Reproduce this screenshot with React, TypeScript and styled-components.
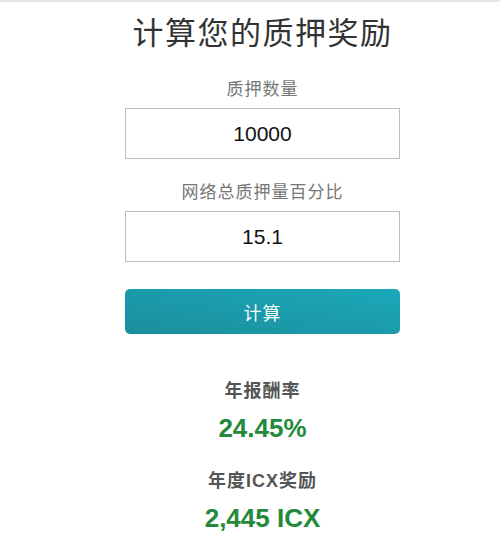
import styled, {createGlobalStyle} from 'styled-components';

const GlobalStyle = createGlobalStyle`
  html, body {
    margin: 0;
    padding: 0;
    background: #ffffff;
  }
`

const Page = styled.div`
  border-top: 2px solid #e6e6e6;
  width: 500px;
  height: 542px;
  overflow: hidden;
`

const Panel = styled.section`
  width: 275px;
  margin-left: 125px;
  display: flex;
  flex-direction: column;
  align-items: stretch;
  text-align: center;
`

const Title = styled.h1`
  margin: 14px -40px 0;
  font-family: "Liberation Serif", "Noto Sans CJK SC", serif;
  font-size: 31px;
  font-weight: 400;
  line-height: 36px;
  color: #333333;
  letter-spacing: 1.5px;
`

const Label = styled.label<{ $top: number }>`
  margin-top: ${p => p.$top}px;
  margin-bottom: 8px;
  font-family: "Liberation Serif", "Noto Sans CJK SC", serif;
  font-size: 17px;
  line-height: 20px;
  letter-spacing: 1px;
  color: #777777;
`

const Input = styled.input`
  box-sizing: border-box;
  width: 100%;
  height: 51px;
  border: 1px solid #bdbdbd;
  border-radius: 0;
  text-align: center;
  font-family: "Liberation Sans", Arial, sans-serif;
  font-size: 21px;
  color: #111111;
  outline: none;
`

const Button = styled.button`
  margin-top: 27px;
  height: 45px;
  border: none;
  border-radius: 5px;
  background: linear-gradient(to top right, #1b8e9c, #1ba8ba);
  color: #f4fbfc;
  font-family: "Liberation Serif", "Noto Sans CJK SC", serif;
  font-size: 18px;
  letter-spacing: 1px;
  cursor: pointer;
`

const Result = styled.div<{ $top: number }>`
  margin-top: ${p => p.$top}px;
  display: flex;
  flex-direction: column;
  align-items: center;
  gap: 10px;
`

const ResultLabel = styled.div`
  font-family: "Liberation Sans", "Noto Sans CJK SC", sans-serif;
  font-size: 18px;
  font-weight: 700;
  line-height: 22px;
  letter-spacing: 1px;
  color: #555555;
`

const ResultValue = styled.div`
  font-family: "Liberation Sans", Arial, sans-serif;
  font-size: 26px;
  font-weight: 700;
  line-height: 32px;
  color: #24893a;
`

export default function App() {
  return (
    <>
      <GlobalStyle/>
      <Page>
        <Panel>
          <Title>计算您的质押奖励</Title>
          <Label $top={28}>质押数量</Label>
          <Input defaultValue="10000"/>
          <Label $top={24}>网络总质押量百分比</Label>
          <Input defaultValue="15.1"/>
          <Button>计算</Button>
          <Result $top={46}>
            <ResultLabel>年报酬率</ResultLabel>
            <ResultValue>24.45%</ResultValue>
          </Result>
          <Result $top={26}>
            <ResultLabel>年度ICX奖励</ResultLabel>
            <ResultValue>2,445 ICX</ResultValue>
          </Result>
        </Panel>
      </Page>
    </>
  );
}
